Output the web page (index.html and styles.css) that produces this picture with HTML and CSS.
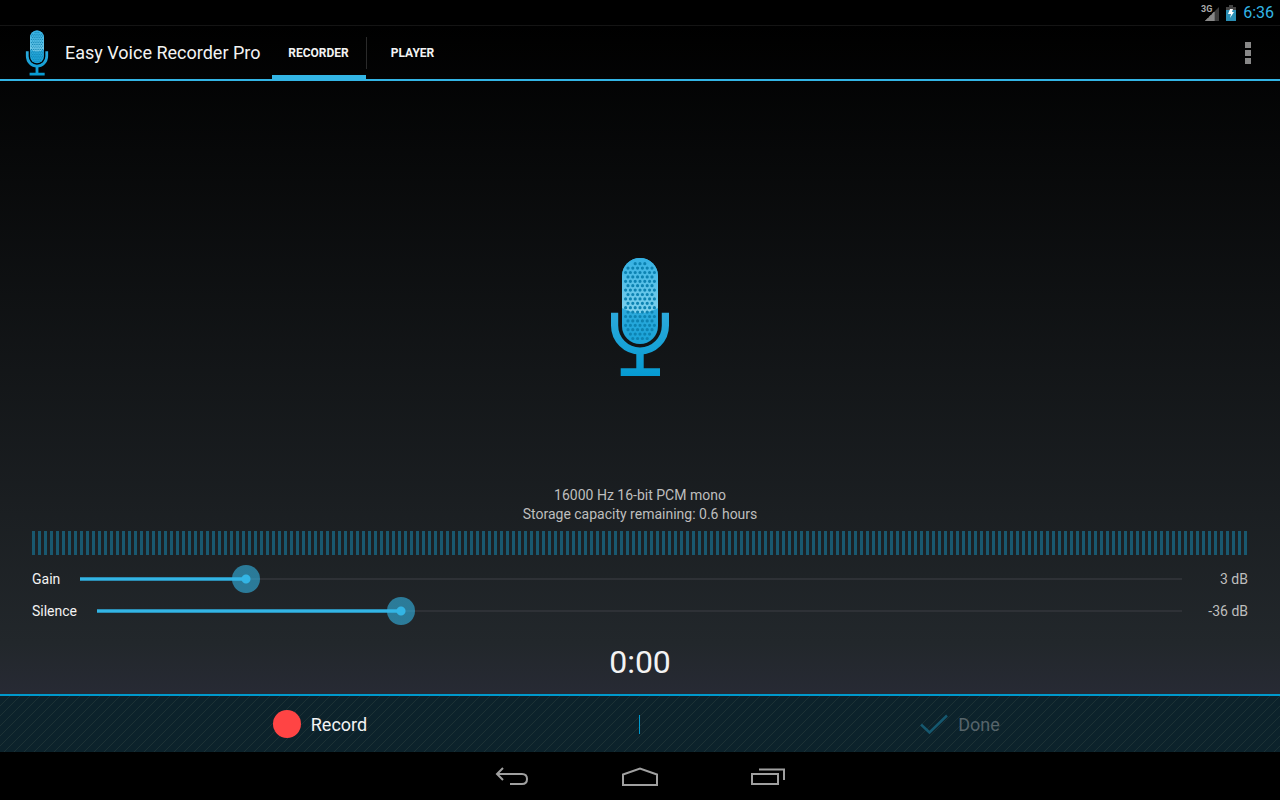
FILE: index.html
```html
<!DOCTYPE html>
<html lang="en">
<head>
    <meta charset="UTF-8">
    <meta name="viewport" content="width=device-width, initial-scale=1.0">
    <title>Easy Voice Recorder Pro</title>
    <link rel="stylesheet" href="styles.css">
</head>
<body>
    <div class="status-bar">
        <svg class="signal" width="20" height="18" viewBox="0 0 20 18">
            <text x="1" y="8" class="signal-text">3G</text>
            <path d="M5 17L8 14V17Z M9 17V13L11 11V17Z M12 17V10L14.500 7.500V17Z" fill="#aaa"/>
            <path d="M5 17L14.500 7.500V17Z" fill="#888"/>
            <path d="M15 17V7L19 3V17Z" fill="#3c3c3c"/>
        </svg>
        <svg class="battery" width="10" height="16" viewBox="0 0 10 16">
            <path d="M3 0H7V2H10V6H0V2H3Z" fill="#444"/>
            <path d="M0 5H10V16H0Z" fill="#2b8fb5"/>
            <path d="M4 4H7L6 7H8L4 13L5 9H2Z" fill="#fff"/>
        </svg>
        <span class="clock">6:36</span>
    </div>

    <div class="screen">
        <header class="action-bar">
            <svg class="app-icon" viewBox="0 0 60 120">
                <use href="#mic"/>
            </svg>
            <h1>Easy Voice Recorder Pro</h1>
            <nav class="tabs">
                <a href="#recorder" class="tab active">RECORDER</a>
                <a href="#player" class="tab">PLAYER</a>
            </nav>
            <button class="overflow" aria-label="More options">
                <svg width="6" height="22" viewBox="0 0 6 22" fill="#888">
                    <path d="M0 0H6V6H0Z M0 8H6V14H0Z M0 16H6V22H0Z"/>
                </svg>
            </button>
        </header>

        <main class="recorder" id="recorder">
            <div class="stage">
                <svg class="mic" viewBox="0 0 60 120">
                    <defs>
                        <linearGradient id="topShade" x1="0" y1="0" x2="0" y2="1">
                            <stop offset="0" stop-color="#33b0e2"/>
                            <stop offset="1" stop-color="#80d2ee"/>
                        </linearGradient>
                        <linearGradient id="baseShade" gradientUnits="userSpaceOnUse" x1="0" y1="50" x2="0" y2="119">
                            <stop offset="0" stop-color="#2fabdd"/>
                            <stop offset="1" stop-color="#069bd2"/>
                        </linearGradient>
                        <g id="mic">
                            <rect x="12" y="1" width="36" height="86" rx="18" fill="url(#baseShade)"/>
                            <path d="M12 19A18 18 0 0 1 48 19V51Q30 61 12 51Z" fill="url(#topShade)"/>
                            <!-- grille, one dotted line for each row -->
                            <path d="M25.2 6.7h9.7 M18 11.1h24.1 M15.6 15.5h28.9 M18 19.9h24.1 M15.6 24.3h28.9 M18 28.7h24.1 M15.6 33.1h28.9 M18 37.5h24.1 M15.6 41.9h28.9 M18 46.3h24.1 M15.6 50.7h28.9 M18 55.1h24.1 M15.6 59.5h28.9 M18 63.9h24.1 M15.6 68.3h28.9 M18 72.7h24.1 M20.4 77.1h19.3 M22.8 81.5h14.5"
                                fill="none" stroke="#0d83b2" stroke-width="3.2" stroke-linecap="round" stroke-dasharray="0 4.8"/>
                            <path d="M4.6 55.7V68.6A25.4 25.4 0 0 0 55.4 68.6V55.7" fill="none" stroke="url(#baseShade)" stroke-width="7.2"/>
                            <path d="M26.3 96H33.7V111.3H50V119H10.7V111.3H26.3Z" fill="url(#baseShade)"/>
                        </g>
                    </defs>
                    <use href="#mic"/>
                </svg>
            </div>

            <p class="info">16000 Hz 16-bit PCM mono<br>Storage capacity remaining: 0.6 hours</p>

            <div class="meter"></div>

            <div class="slider-row">
                <label for="gain">Gain</label>
                <input type="range" id="gain" class="slider" min="0" max="20" value="3" style="--fill: 0.15">
                <output for="gain" id="gainValue">3 dB</output>
            </div>
            <div class="slider-row">
                <label for="silence">Silence</label>
                <input type="range" id="silence" class="slider" min="-50" max="0" value="-36" style="--fill: 0.28">
                <output for="silence" id="silenceValue">-36 dB</output>
            </div>

            <div class="timer">0:00</div>
        </main>

        <footer class="controls">
            <button class="control">
                <span class="record-dot"></span>
                Record
            </button>
            <button class="control" disabled>
                <svg width="28" height="22" viewBox="0 0 28 22">
                    <path d="M1 11.500L9.500 19.500L27 2.500" fill="none" stroke="#15576e" stroke-width="2.500"/>
                </svg>
                Done
            </button>
        </footer>
    </div>

    <nav class="system-nav">
        <button aria-label="Back">
            <svg width="34" height="20" viewBox="0 0 34 20">
                <path d="M8 1L2 7L8 13 M2 7H27Q32 7 32 12Q32 17 27 17H15"/>
            </svg>
        </button>
        <button aria-label="Home">
            <svg width="36" height="20" viewBox="0 0 36 20">
                <path d="M1 18V7.500L18 1.500L35 7.500V18Z"/>
            </svg>
        </button>
        <button aria-label="Recent apps">
            <svg width="34" height="18" viewBox="0 0 34 18">
                <path d="M1 6H27V16H1Z M8 1.500H33V12"/>
            </svg>
        </button>
    </nav>

    <script>
        // Keep the filled part of the track and the label in step with the thumb
        document.querySelectorAll('.slider').forEach((slider) => {
            slider.addEventListener('input', () => {
                const fill = (slider.value - slider.min) / (slider.max - slider.min);
                slider.style.setProperty('--fill', fill);
                document.getElementById(slider.id + 'Value').textContent = slider.value + ' dB';
            });
        });
    </script>
</body>
</html>
```

FILE: styles.css
```css
* {
    box-sizing: border-box;
}
body {
    margin: 0;
    min-height: 100vh;
    display: flex;
    flex-direction: column;
    background: #000;
    color: #f3f3f3;
    font-family: Roboto, sans-serif;
    font-size: 14px;
}
button {
    padding: 0;
    border: none;
    background: none;
    color: inherit;
    font: inherit;
    cursor: pointer;
}
.status-bar {
    display: flex;
    align-items: center;
    justify-content: flex-end;
    height: 25px;
    padding-right: 6px;
}
.signal {
    margin-right: 6px;
}
.signal-text {
    fill: #aaa;
    font-size: 9px;
    font-weight: bold;
}
.battery {
    margin-right: 7px;
}
.clock {
    color: #33b5e5;
    font-size: 16px;
}
.screen {
    flex: 1;
    display: flex;
    flex-direction: column;
    background: linear-gradient(#000, #22272b 85%, #272a34 92%);
}
.action-bar {
    display: flex;
    align-items: center;
    height: 56px;
    padding-left: 25px;
    border-top: 1px solid #141414;
    border-bottom: 2px solid #33b5e5;
}
.app-icon {
    width: 24px;
    height: 46px;
}
h1 {
    margin: 0 11px 0 16px;
    font-size: 18px;
    font-weight: normal;
    line-height: 24px;
}
.tabs {
    display: flex;
    align-self: stretch;
}
.tab {
    display: flex;
    align-items: center;
    justify-content: center;
    min-width: 94px;
    padding: 4px 16px 0;
    border-bottom: 4px solid transparent;
    color: #f3f3f3;
    font-size: 12px;
    font-weight: bold;
    text-decoration: none;
}
.tab.active {
    border-bottom-color: #33b5e5;
}
.tab + .tab {
    background: linear-gradient(#2a2a2a, #2a2a2a) left 11px / 1px 32px no-repeat;
}
.overflow {
    align-self: stretch;
    width: 64px;
    margin-left: auto;
}
.overflow svg {
    display: block;
    margin: 0 auto;
}
.recorder {
    flex: 1;
    display: flex;
    flex-direction: column;
    padding: 0 32px;
}
.stage {
    flex: 1;
    display: flex;
    align-items: center;
    justify-content: center;
    padding-top: 66px;
}
.mic {
    width: 60px;
    height: 120px;
}
.info {
    margin: 0 0 7px;
    color: #bebebe;
    line-height: 19px;
    text-align: center;
}
.meter {
    height: 24px;
    margin-bottom: 8px;
    background: repeating-linear-gradient(90deg, #19586f 0 3px, transparent 3px 6px);
}
.slider-row {
    display: flex;
    align-items: center;
    gap: 6px;
    height: 32px;
}
.slider-row output {
    width: 46px;
    color: #bebebe;
    text-align: right;
}
.slider {
    flex: 1;
    min-width: 0;
    height: 28px;
    margin: 0;
    appearance: none;
    background:
        linear-gradient(#2b8db3 1px, #33b5e5 1px 3px, #2b8db3 3px) 14px center / calc((100% - 28px) * var(--fill)) 4px no-repeat,
        linear-gradient(#2e3136, #2e3136) center / calc(100% - 28px) 2px no-repeat;
}
.slider::-webkit-slider-thumb {
    appearance: none;
    width: 28px;
    height: 28px;
    border-radius: 50%;
    background: radial-gradient(circle, #33b5e5 4px, rgba(51, 181, 229, 0.6) 5px);
}
.timer {
    padding: 15px 0 12px;
    font-size: 32px;
    line-height: 40px;
    text-align: center;
}
.controls {
    display: flex;
    height: 58px;
    border-top: 2px solid #0099cc;
    background:
        linear-gradient(#0099cc, #0099cc) calc(50% - 1px) center / 1px 19px no-repeat,
        linear-gradient(135deg, transparent 46%, #1d3235 48% 52%, transparent 54%) 0 0 / 10px 10px,
        #0c222b;
}
.control {
    flex: 1;
    display: flex;
    align-items: center;
    justify-content: center;
    gap: 10px;
    font-size: 18px;
}
.control:disabled {
    color: #56646a;
    cursor: default;
}
.record-dot {
    width: 28px;
    height: 28px;
    border-radius: 50%;
    background: #ff4444;
}
.system-nav {
    display: flex;
    justify-content: center;
    height: 48px;
    padding-top: 2px;
}
.system-nav button {
    display: flex;
    align-items: center;
    justify-content: center;
    width: 128px;
}
.system-nav svg {
    fill: none;
    stroke: #a0a0a0;
    stroke-width: 2;
}
```
